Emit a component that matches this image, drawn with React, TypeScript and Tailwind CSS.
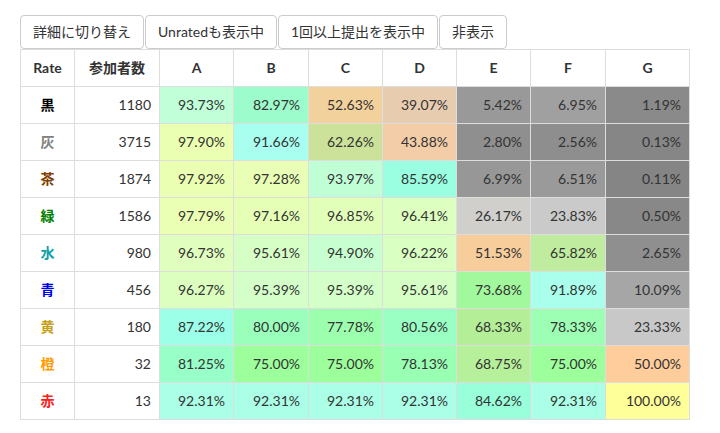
import React from "react";

const FONT = "font-['Lato','Noto_Sans_CJK_JP',sans-serif]";

const buttons = ["詳細に切り替え", "Unratedも表示中", "1回以上提出を表示中", "非表示"];

const colWidths = [54, 85, 74, 75, 74, 74, 74, 75, 84];

type Cell = [string, string];

const rows: { label: string; color: string; count: number; cells: Cell[] }[] = [
    {
        label: "黒", color: "#000000", count: 1180, cells: [
            ["93.73%", "#c0ffd8"], ["82.97%", "#9cfccc"], ["52.63%", "#f2d19c"], ["39.07%", "#e8ccb0"],
            ["5.42%", "#999999"], ["6.95%", "#a0a0a0"], ["1.19%", "#8a8a8a"],
        ],
    },
    {
        label: "灰", color: "#808080", count: 3715, cells: [
            ["97.90%", "#ebffb2"], ["91.66%", "#a8fff0"], ["62.26%", "#cce29a"], ["43.88%", "#f3cda8"],
            ["2.80%", "#8f8f8f"], ["2.56%", "#8e8e8e"], ["0.13%", "#868686"],
        ],
    },
    {
        label: "茶", color: "#804000", count: 1874, cells: [
            ["97.92%", "#ebffb2"], ["97.28%", "#e8ffb5"], ["93.97%", "#c0ffd6"], ["85.59%", "#99ffe0"],
            ["6.99%", "#979797"], ["6.51%", "#9a9a9a"], ["0.11%", "#858585"],
        ],
    },
    {
        label: "緑", color: "#008000", count: 1586, cells: [
            ["97.79%", "#eaffb3"], ["97.16%", "#e6ffb6"], ["96.85%", "#e2ffba"], ["96.41%", "#ddffbf"],
            ["26.17%", "#d0cfcc"], ["23.83%", "#cacaca"], ["0.50%", "#888888"],
        ],
    },
    {
        label: "水", color: "#10a0a8", count: 980, cells: [
            ["96.73%", "#e0ffbe"], ["95.61%", "#d6ffc6"], ["94.90%", "#c8ffd0"], ["96.22%", "#d9ffc3"],
            ["51.53%", "#f8cd9c"], ["65.82%", "#c0eca0"], ["2.65%", "#8f8f8f"],
        ],
    },
    {
        label: "青", color: "#0000f0", count: 456, cells: [
            ["96.27%", "#dcffc0"], ["95.39%", "#d4ffc8"], ["95.39%", "#d4ffc8"], ["95.61%", "#d6ffc6"],
            ["73.68%", "#a2f89c"], ["91.89%", "#aaffec"], ["10.09%", "#a6a6a6"],
        ],
    },
    {
        label: "黄", color: "#c8a020", count: 180, cells: [
            ["87.22%", "#9cffe8"], ["80.00%", "#99ffbb"], ["77.78%", "#9cffae"], ["80.56%", "#99ffc2"],
            ["68.33%", "#b4ef98"], ["78.33%", "#9cffb4"], ["23.33%", "#c8c8c8"],
        ],
    },
    {
        label: "橙", color: "#ff9a00", count: 32, cells: [
            ["81.25%", "#99ffc8"], ["75.00%", "#9cff9c"], ["75.00%", "#9cff9c"], ["78.13%", "#99ffb2"],
            ["68.75%", "#b6f09a"], ["75.00%", "#9cff9c"], ["50.00%", "#ffcc9c"],
        ],
    },
    {
        label: "赤", color: "#ff2020", count: 13, cells: [
            ["92.31%", "#aaffe6"], ["92.31%", "#aaffe6"], ["92.31%", "#aaffe6"], ["92.31%", "#aaffe6"],
            ["84.62%", "#99ffda"], ["92.31%", "#aaffe6"], ["100.00%", "#ffff99"],
        ],
    },
];

const headers = ["Rate", "参加者数", "A", "B", "C", "D", "E", "F", "G"];

export default function App() {
    return (
        <div className={`${FONT} min-h-[433px] bg-white pl-[20px] pt-[15px] text-[14px] leading-[20px] text-[#333]`}>
            {/* Toggle buttons */}
            <div className="flex gap-[1px]">
                {buttons.map(b => (
                    <button
                        key={b}
                        className="h-[34px] rounded-[4px] border border-[#ccc] bg-white px-[12px] py-[6px] text-[14px] leading-[20px] text-[#333]">
                        {b}
                    </button>
                ))}
            </div>

            {/* Stats table */}
            <table className="table-fixed border-collapse w-[669px]">
                <colgroup>
                    {colWidths.map((w, i) => (
                        <col key={i} style={{ width: w }} />
                    ))}
                </colgroup>
                <thead>
                    <tr>
                        {headers.map(h => (
                            <th key={h} className="h-[37px] border border-[#ddd] px-[8px] text-center font-bold">
                                {h}
                            </th>
                        ))}
                    </tr>
                </thead>
                <tbody>
                    {rows.map(r => (
                        <tr key={r.label}>
                            <td className="h-[37px] border border-[#ddd] px-[8px] text-center font-bold" style={{ color: r.color }}>
                                {r.label}
                            </td>
                            <td className="border border-[#ddd] px-[8px] text-right">{r.count}</td>
                            {r.cells.map(([v, bg], i) => (
                                <td key={i} className="border border-[#ddd] px-[8px] text-right" style={{ backgroundColor: bg }}>
                                    {v}
                                </td>
                            ))}
                        </tr>
                    ))}
                </tbody>
            </table>
        </div>
    );
}
